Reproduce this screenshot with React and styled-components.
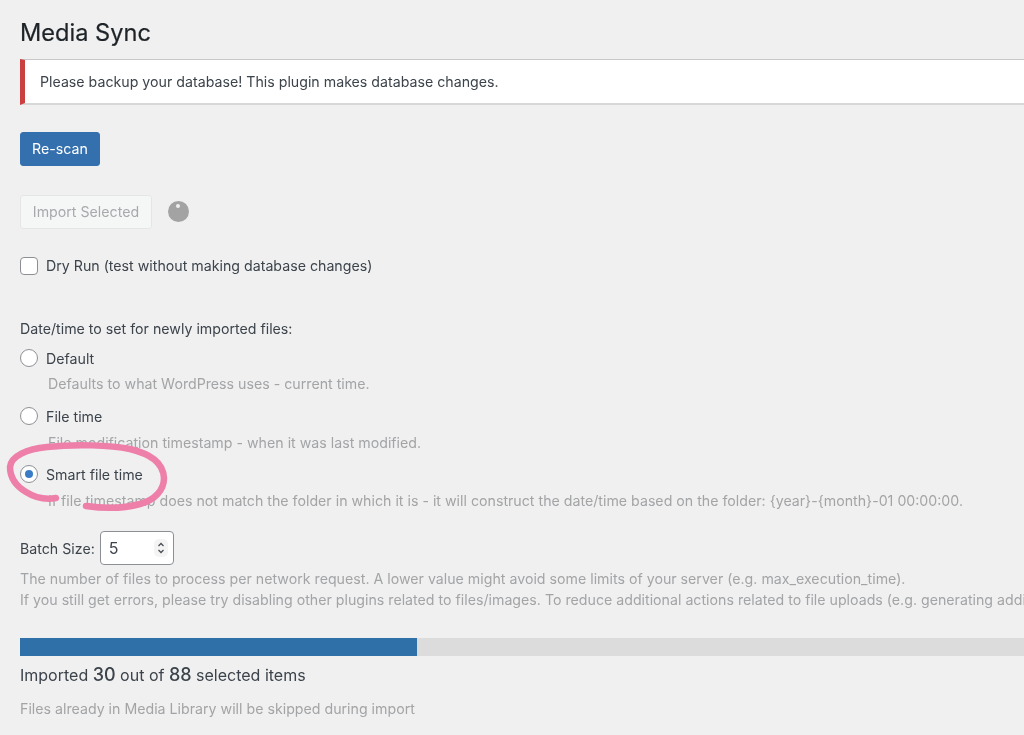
import styled, { createGlobalStyle } from "styled-components";

const GlobalStyle = createGlobalStyle`
  html, body {
    margin: 0;
    padding: 0;
    background: #f0f0f1;
    overflow: hidden;
  }
  body {
    font-family: Inter, "Liberation Sans", sans-serif;
    color: #3c434a;
  }
`;

const Page = styled.div`
  position: relative;
  width: 1024px;
  height: 735px;
  overflow: hidden;
  padding: 0 0 0 20px;
  box-sizing: border-box;
  filter: blur(0.35px);
`;

const Title = styled.h1`
  margin: 0;
  padding-top: 18px;
  box-sizing: border-box;
  height: 59px;
  font-size: 23.6px;
  line-height: 30px;
  font-weight: 400;
  color: #1d2327;
  -webkit-text-stroke: 0.2px #1d2327;
`;

const Notice = styled.div`
  width: 1100px;
  height: 46px;
  box-sizing: border-box;
  display: flex;
  align-items: center;
  padding-left: 15px;
  background: #fff;
  border-left: 5px solid #c9403f;
  border-top: 1px solid #c8c8c9;
  border-bottom: 2px solid #d8d8d9;
  font-size: 14.2px;
  color: #3c434a;
`;

const Button = styled.button`
  display: block;
  box-sizing: border-box;
  height: 34px;
  padding: 0 0 2px;
  width: ${(p) => p.$width}px;
  border-radius: 3px;
  font-family: inherit;
  font-size: 14.2px;
  border: 1px solid ${(p) => (p.$primary ? "#3570ae" : "#e4e5e5")};
  background: ${(p) => (p.$primary ? "#3570ae" : "#f5f6f6")};
  color: ${(p) => (p.$primary ? "#fff" : "#a7aaad")};
`;

const PrimaryRow = styled.div`
  margin-top: 27px;
`;

const ImportRow = styled.div`
  margin-top: 29px;
  display: flex;
  align-items: center;
  gap: 16px;
`;

const Spinner = styled.span`
  position: relative;
  display: block;
  width: 21px;
  height: 21px;
  margin-top: -1px;
  border-radius: 50%;
  background: #a3a3a3;
  &::after {
    content: "";
    position: absolute;
    left: 8px;
    top: 3px;
    width: 4px;
    height: 4px;
    border-radius: 50%;
    background: #f0f0f1;
  }
`;

const CheckRow = styled.label`
  margin-top: 27px;
  height: 19px;
  display: flex;
  align-items: center;
  gap: 8px;
  font-size: 14.2px;
`;

const Checkbox = styled.span`
  display: block;
  box-sizing: border-box;
  width: 18px;
  height: 18px;
  background: #fff;
  border: 1px solid #8c8f94;
  border-radius: 4px;
`;

const GroupLabel = styled.div`
  margin-top: 44px;
  height: 20px;
  line-height: 20px;
  font-size: 14.2px;
`;

const RadioRow = styled.label`
  margin-top: ${(p) => p.$top}px;
  height: 20px;
  display: flex;
  align-items: center;
  gap: 8px;
  font-size: 14.2px;
`;

const Radio = styled.span`
  display: flex;
  align-items: center;
  justify-content: center;
  box-sizing: border-box;
  width: 18px;
  height: 18px;
  background: #fff;
  border: 1px solid #8c8f94;
  border-radius: 50%;
`;

const RadioDot = styled.span`
  display: block;
  width: 8px;
  height: 8px;
  border-radius: 50%;
  background: #3a7cc6;
`;

const RadioHint = styled.div`
  margin-top: ${(p) => p.$top}px;
  margin-left: 28px;
  height: 20px;
  line-height: 20px;
  font-size: 14.2px;
  color: #a2a4a6;
  white-space: nowrap;
`;

const BatchRow = styled.div`
  margin-top: 20px;
  height: 34px;
  display: flex;
  align-items: center;
  gap: 5px;
  font-size: 14.2px;
`;

const NumberBox = styled.div`
  box-sizing: border-box;
  width: 74px;
  height: 34px;
  padding: 0 5px 0 8px;
  display: flex;
  align-items: center;
  justify-content: space-between;
  background: #fff;
  border: 1px solid #8c8f94;
  border-radius: 4px;
  font-size: 16px;
`;

const Hint = styled.div`
  height: 21px;
  line-height: 21px;
  font-size: 14.2px;
  color: #a2a4a6;
  white-space: nowrap;
`;

const HintBlock = styled.div`
  margin-top: 3px;
`;

const Track = styled.div`
  margin-top: 28px;
  width: 1100px;
  height: 18px;
  background: #dcdcdc;
`;

const Fill = styled.div`
  height: 100%;
  background: #3070a8;
`;

const Status = styled.div`
  margin-top: 8px;
  height: 22px;
  line-height: 22px;
  font-size: 16px;
  color: #3c434a;
`;

const Count = styled.span`
  font-size: 18px;
  font-weight: 500;
`;

const Footnote = styled(Hint)`
  margin-top: 12px;
`;

const Scribble = styled.svg`
  position: absolute;
  left: 0;
  top: 440px;
`;

const Stepper = () => (
  <svg width="14" height="18" viewBox="0 0 14 18">
    <rect x="0" y="0" width="14" height="18" rx="5" fill="#f4f4f4" />
    <path d="M4.5 7 7 4.5 9.500 7M4.500 11 7 13.500 9.500 11" fill="none" stroke="#4a4f55" strokeWidth="1.300" />
  </svg>
);

const App = () => {
  return (
    <Page>
      <GlobalStyle />
      <Title>Media Sync</Title>
      <Notice>Please backup your database! This plugin makes database changes.</Notice>
      <PrimaryRow>
        <Button $primary $width={80}>Re-scan</Button>
      </PrimaryRow>
      <ImportRow>
        <Button $width={132}>Import Selected</Button>
        <Spinner />
      </ImportRow>
      <CheckRow>
        <Checkbox />
        Dry Run (test without making database changes)
      </CheckRow>
      <GroupLabel>Date/time to set for newly imported files:</GroupLabel>
      <RadioRow $top={9}>
        <Radio />
        Default
      </RadioRow>
      <RadioHint $top={6}>Defaults to what WordPress uses - current time.</RadioHint>
      <RadioRow $top={12}>
        <Radio />
        File time
      </RadioRow>
      <RadioHint $top={7}>File modification timestamp - when it was last modified.</RadioHint>
      <RadioRow $top={11}>
        <Radio>
          <RadioDot />
        </Radio>
        Smart file time
      </RadioRow>
      <RadioHint $top={7}>If file timestamp does not match the folder in which it is - it will construct the date/time based on the folder: {"{year}-{month}"}-01 00:00:00.</RadioHint>
      <BatchRow>
        Batch Size:
        <NumberBox>
          5
          <Stepper />
        </NumberBox>
      </BatchRow>
      <HintBlock>
        <Hint>The number of files to process per network request. A lower value might avoid some limits of your server (e.g. max_execution_time).</Hint>
        <Hint>If you still get errors, please try disabling other plugins related to files/images. To reduce additional actions related to file uploads (e.g. generating additional image sizes).</Hint>
      </HintBlock>
      <Track>
        <Fill style={{ width: `${(397 / 1100) * 100}%` }} />
      </Track>
      <Status>
        Imported <Count>30</Count> out of <Count>88</Count> selected items
      </Status>
      <Footnote>Files already in Media Library will be skipped during import</Footnote>
      <Scribble width="180" height="80" viewBox="0 0 180 80">
        <path
          d="M56 58C45 60 34 57 26 52C16 46 10 37 10 27C11 16 27 9 47 7C75 4 110 5 130 9C150 14 163 22 164 38C164 50 155 60 140 64C122 69 100 68 86 66"
          fill="none"
          stroke="#ee7fa9"
          strokeWidth="6.5"
          strokeLinecap="round"
        />
      </Scribble>
    </Page>
  );
};

export default App;
